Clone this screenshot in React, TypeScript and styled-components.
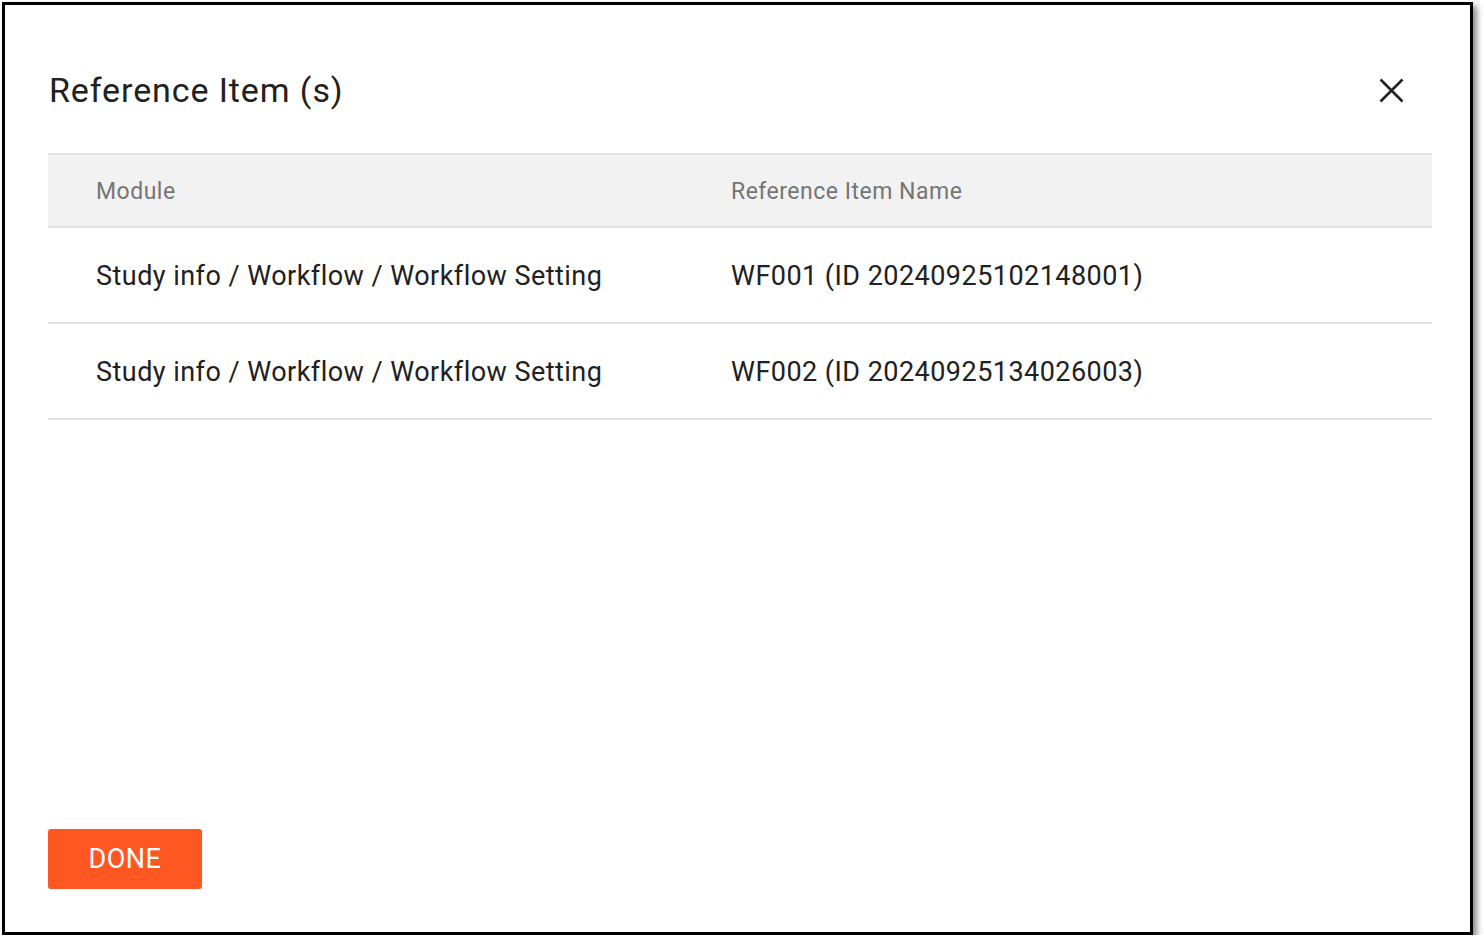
import * as React from "react";
import styled, { createGlobalStyle } from "styled-components";

const GlobalStyle = createGlobalStyle`
  html, body {
    margin: 0;
    padding: 0;
    background: #ffffff;
    font-family: Roboto, "Liberation Sans", Arial, sans-serif;
  }
`;

const rows = [
  { module: "Study info / Workflow / Workflow Setting", name: "WF001 (ID 20240925102148001)" },
  { module: "Study info / Workflow / Workflow Setting", name: "WF002 (ID 20240925134026003)" },
];

const App = () => (
  <>
    <GlobalStyle />
    <Frame>
      <DialogHeader>
        <Title>Reference Item (s)</Title>
        <CloseButton aria-label="close">
          <svg width="40" height="40" viewBox="0 0 40 40">
            <path d="M9.5 8.5 L31.5 30.5 M31.5 8.5 L9.5 30.5" stroke="#222" strokeWidth="2.6" fill="none" />
          </svg>
        </CloseButton>
      </DialogHeader>
      <Table>
        <HeadRow>
          <HeadCell>Module</HeadCell>
          <HeadCell>Reference Item Name</HeadCell>
        </HeadRow>
        {rows.map((row) => (
          <Row key={row.name}>
            <Cell>{row.module}</Cell>
            <Cell>{row.name}</Cell>
          </Row>
        ))}
      </Table>
      <Spacer />
      <Footer>
        <DoneButton>DONE</DoneButton>
      </Footer>
    </Frame>
  </>
);

const Frame = styled.div`
  box-sizing: border-box;
  margin: 2px 0 0 2px;
  width: 1471px;
  height: 933px;
  border: 3px solid #000;
  box-shadow: 4px 4px 6px rgba(0, 0, 0, 0.45);
  background: #fff;
  padding: 0 38px 0 43px;
  display: flex;
  flex-direction: column;
`;

const DialogHeader = styled.div`
  display: flex;
  align-items: center;
  justify-content: space-between;
  height: 56px;
  margin-top: 55px;
  margin-bottom: 37px;
`;

const Title = styled.h2`
  margin: 4px 0 0;
  padding-left: 1px;
  font-size: 34px;
  font-weight: 400;
  letter-spacing: 0.9px;
  line-height: 56px;
  color: #212121;
`;

const CloseButton = styled.button`
  width: 40px;
  height: 40px;
  margin: 6px 21px 0 0;
  padding: 0;
  border: none;
  background: transparent;
  display: flex;
  align-items: center;
  justify-content: center;
  cursor: pointer;
`;

const Table = styled.div`
  display: flex;
  flex-direction: column;
`;

const HeadRow = styled.div`
  box-sizing: border-box;
  display: grid;
  grid-template-columns: 635px 1fr;
  height: 75px;
  align-items: center;
  background: #f2f2f2;
  border-top: 2px solid #e2e2e2;
  border-bottom: 2px solid #e2e2e2;
`;

const HeadCell = styled.div`
  padding-left: 48px;
  padding-top: 1px;
  font-size: 23px;
  letter-spacing: 0.5px;
  color: #757575;
`;

const Row = styled.div`
  box-sizing: border-box;
  display: grid;
  grid-template-columns: 635px 1fr;
  height: 96px;
  align-items: center;
  border-bottom: 2px solid #e2e2e2;
`;

const Cell = styled.div`
  padding-left: 48px;
  padding-top: 1px;
  font-size: 27px;
  letter-spacing: 0.46px;
  color: #212121;
`;

const Spacer = styled.div`
  flex: 1;
`;

const Footer = styled.div`
  display: flex;
  margin-bottom: 43px;
`;

const DoneButton = styled.button`
  width: 154px;
  height: 60px;
  border: none;
  border-radius: 3px;
  background: #ff5722;
  color: #fff;
  font-family: Roboto, "Liberation Sans", Arial, sans-serif;
  font-size: 27px;
  letter-spacing: 0.5px;
  font-weight: 400;
  padding: 0;
  cursor: pointer;
`;

export default App;
